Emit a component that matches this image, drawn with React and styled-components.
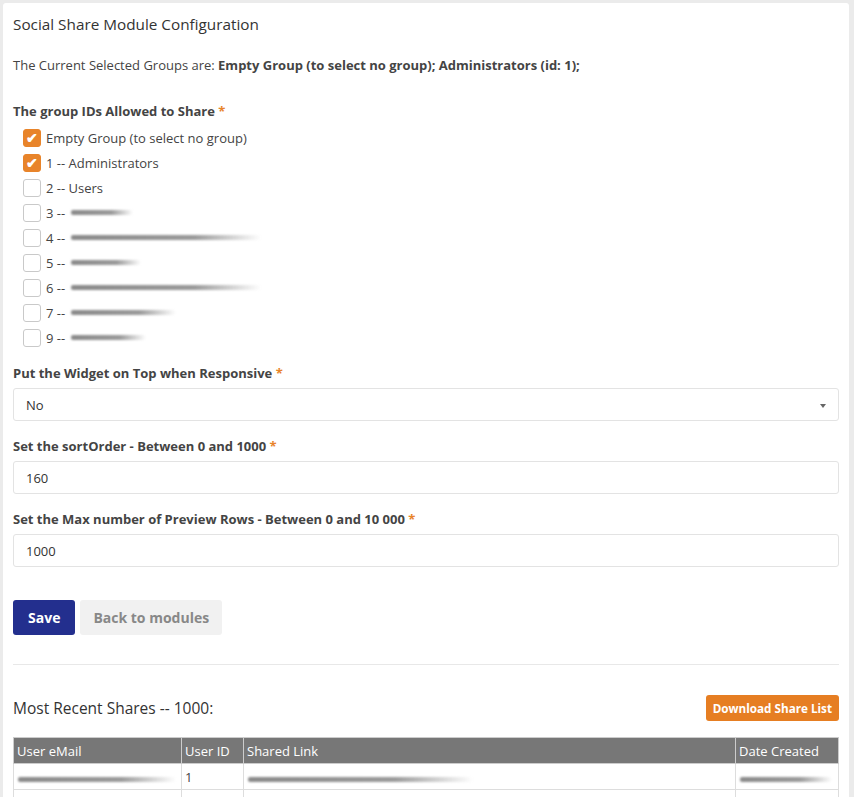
import React from 'react';
import styled, { createGlobalStyle } from 'styled-components';

const GlobalStyle = createGlobalStyle`
  html, body {
    margin: 0;
    padding: 0;
    background: #ebebeb;
    font-family: 'Open Sans', 'Noto Sans', sans-serif;
    color: #333;
  }
  * { box-sizing: border-box; }
`;

const Page = styled.div`
  padding: 3px 5px 0 3px;
`;

const Card = styled.div`
  background: #fff;
  border-radius: 3px 3px 0 0;
  padding: 10px 10px 0 10px;
  min-height: 794px;
  overflow: hidden;
`;

const Title = styled.h2`
  margin: 0;
  font-size: 15.3px;
  font-weight: 400;
  line-height: 22px;
  color: #333;
`;

const Info = styled.p`
  margin: 21px 0 0;
  font-size: 13px;
  line-height: 18px;
  color: #444;
  b { font-weight: 700; color: #444; }
`;

const Label = styled.div`
  font-size: 13px;
  font-weight: 700;
  line-height: 18px;
  color: #444;
  margin-top: ${(p) => p.$top || 18}px;
`;

const Star = styled.span`
  color: #e8842a;
`;

const CheckList = styled.div`
  display: flex;
  flex-direction: column;
  margin-top: 5px;
  padding-left: 10px;
`;

const CheckRow = styled.label`
  display: flex;
  align-items: center;
  height: 25px;
  font-size: 13px;
  color: #444;
  gap: 5px;
`;

const Box = styled.span`
  width: 18px;
  height: 18px;
  border-radius: 3px;
  border: 1px solid ${(p) => (p.$on ? '#e8842a' : '#c9c9c9')};
  background: ${(p) => (p.$on ? '#e8842a' : '#fff')};
  color: #fff;
  font-size: 14px;
  font-weight: 700;
  line-height: 16px;
  display: flex;
  align-items: center;
  justify-content: center;
`;

const Blur = styled.span`
  display: inline-block;
  width: ${(p) => p.$w}px;
  height: 5px;
  margin-left: 1px;
  border-radius: 2px;
  background: linear-gradient(90deg, #8a8a8a 0%, #9a9a9a 65%, rgba(200, 200, 200, 0) 100%);
  filter: blur(1.3px);
`;

const Field = styled.div`
  margin-top: 6px;
  height: 33px;
  border: 1px solid #e3e3e3;
  border-radius: 3px;
  display: flex;
  align-items: center;
  justify-content: space-between;
  padding: 0 12px 0 12px;
  font-size: 13px;
  color: #333;
`;

const Caret = styled.span`
  width: 0;
  height: 0;
  border-left: 3.5px solid transparent;
  border-right: 3.5px solid transparent;
  border-top: 4px solid #666;
  margin-top: 2px;
`;

const Buttons = styled.div`
  display: flex;
  gap: 5px;
  margin-top: 33px;
`;

const Button = styled.button`
  height: 35px;
  border: none;
  border-radius: 3px;
  padding: 0 ${(p) => (p.$primary ? 15 : 13)}px;
  font-family: inherit;
  font-size: 14px;
  font-weight: 700;
  background: ${(p) => (p.$primary ? '#232f8e' : '#f1f1f1')};
  color: ${(p) => (p.$primary ? '#fff' : '#888')};
`;

const Rule = styled.hr`
  border: none;
  border-top: 1px solid #e8e8e8;
  margin: 29px 0 0;
`;

const SharesHead = styled.div`
  display: flex;
  justify-content: space-between;
  align-items: center;
  margin-top: 30px;
`;

const SharesTitle = styled.div`
  font-size: 15.5px;
  color: #333;
`;

const Download = styled.button`
  height: 26px;
  border: none;
  border-radius: 3px;
  padding: 0 7px;
  font-family: inherit;
  font-size: 11.7px;
  font-weight: 700;
  background: #e67e22;
  color: #fff;
`;

const Table = styled.table`
  width: 100%;
  margin-top: 16px;
  border-collapse: collapse;
  font-size: 13px;
  th, td {
    border: 1px solid #ddd;
    padding: 0 3px;
    text-align: left;
    height: 26px;
  }
  th {
    background: #777;
    color: #fff;
    font-weight: 400;
    border-color: #ccc;
  }
  td { color: #444; }
`;

const groups = [
  { id: 3, w: 62 },
  { id: 4, w: 190 },
  { id: 5, w: 70 },
  { id: 6, w: 190 },
  { id: 7, w: 105 },
  { id: 9, w: 75 },
];

const App = () => (
  <>
    <GlobalStyle />
    <Page>
      <Card>
        <Title>Social Share Module Configuration</Title>
        <Info>
          The Current Selected Groups are: <b>Empty Group (to select no group); Administrators (id: 1);</b>
        </Info>
        <Label $top={28}>
          The group IDs Allowed to Share <Star>*</Star>
        </Label>
        <CheckList>
          <CheckRow>
            <Box $on>✔</Box>Empty Group (to select no group)
          </CheckRow>
          <CheckRow>
            <Box $on>✔</Box>1 -- Administrators
          </CheckRow>
          <CheckRow>
            <Box />2 -- Users
          </CheckRow>
          {groups.map((g) => (
            <CheckRow key={g.id}>
              <Box />
              {g.id} --
              <Blur $w={g.w} />
            </CheckRow>
          ))}
        </CheckList>
        <Label $top={14}>
          Put the Widget on Top when Responsive <Star>*</Star>
        </Label>
        <Field>
          No
          <Caret />
        </Field>
        <Label $top={16}>
          Set the sortOrder - Between 0 and 1000 <Star>*</Star>
        </Label>
        <Field>160</Field>
        <Label $top={16}>
          Set the Max number of Preview Rows - Between 0 and 10 000 <Star>*</Star>
        </Label>
        <Field>1000</Field>
        <Buttons>
          <Button $primary>Save</Button>
          <Button>Back to modules</Button>
        </Buttons>
        <Rule />
        <SharesHead>
          <SharesTitle>Most Recent Shares -- 1000:</SharesTitle>
          <Download>Download Share List</Download>
        </SharesHead>
        <Table>
          <thead>
            <tr>
              <th style={{ width: 168 }}>User eMail</th>
              <th style={{ width: 62 }}>User ID</th>
              <th>Shared Link</th>
              <th style={{ width: 103 }}>Date Created</th>
            </tr>
          </thead>
          <tbody>
            <tr>
              <td><Blur $w={158} /></td>
              <td>1</td>
              <td><Blur $w={225} /></td>
              <td><Blur $w={92} /></td>
            </tr>
            <tr>
              <td />
              <td />
              <td />
              <td />
            </tr>
          </tbody>
        </Table>
      </Card>
    </Page>
  </>
);

export default App;
